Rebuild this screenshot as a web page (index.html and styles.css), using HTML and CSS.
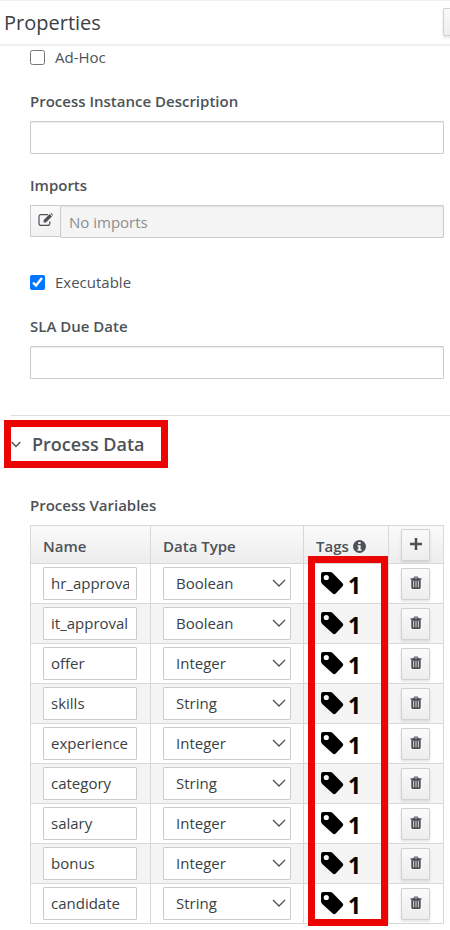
FILE: index.html
```html
<!DOCTYPE html>
<html lang="en">
<head>
<meta charset="utf-8">
<title>Properties</title>
<link rel="stylesheet" href="styles.css">
</head>
<body>
<svg class="sprite" aria-hidden="true">
  <symbol id="tag" viewBox="0 0 24 24"><path fill-rule="evenodd" d="M1 3.2Q1 1 3.2 1H9.8Q11.600 1 12.900 2.200L22.600 12.200Q24 13.700 22.600 15.200L15.700 22.400Q14.200 23.900 12.700 22.400L2.200 12.900Q1 11.700 1 10ZM6.300 3.900a2.600 2.600 0 1 0 0 5.200a2.600 2.600 0 0 0 0-5.200Z"/></symbol>
  <symbol id="trash" viewBox="0 0 12 14"><path fill-rule="evenodd" d="M3.500 2.200 4 .9Q4.200.400 4.700.400H7.300Q7.800.400 8 .900L8.500 2.200H11.500V3.500H10.700V11.600Q10.700 13 9.300 13H2.700Q1.300 13 1.300 11.600V3.500H.500V2.200ZM4.700 2.200H7.300L7 1.400H5ZM3.300 4.700V11.200H4.100V4.700ZM5.600 4.700V11.200H6.400V4.700ZM7.900 4.700V11.200H8.700V4.700Z"/></symbol>
</svg>
<header class="panel-header">
  <h1>Properties</h1>
  <button class="btn header-btn" type="button" aria-label="Close"></button>
</header>
<main class="panel">
  <form class="fields">
    <label class="check"><input type="checkbox">Ad-Hoc</label>
    <div class="field">
      <label for="description">Process Instance Description</label>
      <input class="text" id="description" type="text">
    </div>
    <div class="field imports">
      <label for="imports">Imports</label>
      <div class="group">
        <button type="button" aria-label="Edit imports">
          <svg width="16" height="14" viewBox="0 0 16 14"><path fill="none" stroke="currentColor" stroke-width="1.200" d="M10 1.600H3.200Q1 1.600 1 3.800V10.200Q1 12.400 3.200 12.400H9.600Q11.800 12.400 11.800 10.200V8.500"/><path fill="currentColor" d="M5.600 7.200 11.700 1.100 14 3.400 7.900 9.500H5.600ZM12.300.600Q13-.100 13.800.600L14.700 1.500Q15.300 2.200 14.600 2.800Z"/></svg>
        </button>
        <input class="text" id="imports" type="text" placeholder="No imports" readonly>
      </div>
    </div>
    <label class="check"><input type="checkbox" checked>Executable</label>
    <div class="field sla">
      <label for="sla">SLA Due Date</label>
      <input class="text" id="sla" type="text">
    </div>
  </form>
  <section class="data">
    <h2><button class="toggle" type="button" aria-expanded="true"><svg width="10" height="7" viewBox="0 0 10 7"><path fill="none" stroke="currentColor" stroke-width="1.300" d="M.700 1 5 5.500 9.300 1"/></svg>Process Data</button></h2>
    <div class="variables">
      <h3>Process Variables</h3>
      <div class="table-wrap">
        <table>
          <colgroup><col class="col-name"><col><col class="col-tags"><col class="col-action"></colgroup>
          <thead>
            <tr><th>Name</th><th>Data Type</th>
            <th><span class="tags-title">Tags <svg width="13" height="13" viewBox="0 0 13 13"><circle cx="6.500" cy="6.500" r="6.500" fill="currentColor"/><path fill="#f3f3f3" d="M5.300 2H7.600V4H5.300ZM4.500 5.200H7.600V9.300H8.500V10.700H4.500V9.300H5.400V6.500H4.500Z"/></svg></span></th>
            <th class="action"><button class="btn" type="button" aria-label="Add variable"><svg width="12" height="12" viewBox="0 0 12 12"><path fill="currentColor" d="M4.700 0H7.300V4.700H12V7.300H7.300V12H4.700V7.300H0V4.700H4.700Z"/></svg></button></th></tr>
          </thead>
          <tbody id="rows"></tbody>
        </table>
      </div>
    </div>
  </section>
</main>
<script src="rows.js"></script>
</body>
</html>
```
FILE: rows.js
```js
const variables = [
  ["hr_approval", "Boolean"],
  ["it_approval", "Boolean"],
  ["offer", "Integer"],
  ["skills", "String"],
  ["experience", "Integer"],
  ["category", "String"],
  ["salary", "Integer"],
  ["bonus", "Integer"],
  ["candidate", "String"]
];
const types = ["Boolean", "Integer", "String"];

document.getElementById("rows").innerHTML = variables.map(([name, type]) => `
  <tr>
    <td><input class="name" type="text" aria-label="Name" value="${name}"></td>
    <td><div class="select"><select aria-label="Data type of ${name}">${types.map(t => `<option${t === type ? " selected" : ""}>${t}</option>`).join("")}</select><svg width="14" height="8" viewBox="0 0 14 8"><path fill="none" stroke="currentColor" stroke-width="1.300" d="M1 1 7 7 13 1"/></svg></div></td>
    <td><span class="tag"><svg width="24" height="24"><use href="#tag"/></svg><span class="count">1</span></span></td>
    <td class="action"><button class="btn" type="button" aria-label="Delete ${name}"><svg width="12" height="14"><use href="#trash"/></svg></button></td>
  </tr>`).join("");
```
FILE: styles.css
```css
*, *::before, *::after { box-sizing: border-box; }

body {
  margin: 0;
  min-height: 100vh;
  overflow-x: hidden;
  background: #fff;
  color: #4d5258;
  font: 15px/20px "Open Sans", sans-serif;
}

h1, h2, h3 { margin: 0; }
input, select, button { font: inherit; color: inherit; }
svg { flex: none; }
.sprite { display: none; }

.panel-header {
  display: flex;
  align-items: center;
  justify-content: space-between;
  height: 46px;
  padding-left: 4px;
  overflow: hidden;
  border-top: 1px solid #f0f0f0;
  border-bottom: 2px solid #f0f0f0;
}
.panel-header h1 { font-size: 20px; font-weight: 400; color: #393f44; }

.btn {
  display: flex;
  align-items: center;
  justify-content: center;
  width: 29px;
  height: 32px;
  padding: 0 0 2px;
  border: 1px solid #d1d1d1;
  border-radius: 1px;
  background: linear-gradient(#fafafa, #ededed);
  box-shadow: 0 2px 3px rgba(3, 3, 3, .1);
  fill: currentColor;
}
.header-btn { flex: none; height: 28px; margin: 0 -22px 2px 0; }

.fields { padding: 1px 6px 36px 30px; }
.check { display: flex; align-items: center; gap: 10px; }
.check input { width: 15px; height: 15px; margin: 0; accent-color: #0075ff; }
.field { padding-top: 24px; }
.field > label { display: block; margin-bottom: 10px; font-weight: 600; }
.text {
  display: block;
  width: 100%;
  height: 33px;
  padding: 0 8px;
  border: 1px solid #ccc;
  border-radius: 1px;
  background: #fff;
  box-shadow: inset 0 1px 1px rgba(3, 3, 3, .08);
}
.text::placeholder { color: #8b8d8f; opacity: 1; }
.imports { padding-bottom: 34px; padding-top: 21px; }
.group { display: flex; }
.group button {
  display: flex;
  align-items: center;
  justify-content: center;
  width: 30px;
  height: 32px;
  padding: 0 0 2px;
  border: 1px solid #ccc;
  border-right: 0;
  border-radius: 1px 0 0 1px;
  background: linear-gradient(#fafafa, #f1f1f1);
}
.group .text { flex: 1; width: auto; min-width: 0; background: #f4f4f4; }

.data { margin-left: 11px; border-top: 1px solid #ddd; }
.data h2 { display: flex; padding-top: 4px; margin-left: -7px; }
.toggle {
  display: flex;
  align-items: center;
  gap: 11px;
  height: 48px;
  padding: 0 16px 0 0;
  border: 7px solid #eb0505;
  background: none;
  font-size: 18px;
  font-weight: 600;
}
.variables { padding: 27px 6px 6px 19px; }
.variables h3 { margin-bottom: 10px; font-size: 15px; font-weight: 600; }

.table-wrap { position: relative; }
.table-wrap::after {
  content: "";
  position: absolute;
  top: 31px;
  right: 56px;
  bottom: -2px;
  width: 80px;
  border: 7px solid #eb0505;
  pointer-events: none;
}
table { width: 100%; table-layout: fixed; border-collapse: collapse; }
.col-name { width: 120px; }
.col-tags { width: 85px; }
.col-action { width: 55px; }
th, td { padding: 0 12px; border: 1px solid #d8d8d8; text-align: left; }
thead tr { height: 38px; background: linear-gradient(#fafafa, #ededed); }
tbody tr { height: 40px; }
tbody tr:nth-child(even) { background: #f4f4f4; }
th { padding-top: 3px; font-weight: 600; }
th.action { padding-top: 0; }
.tags-title { display: flex; align-items: center; gap: 4px; }

.name, .select select {
  display: block;
  width: 100%;
  height: 33px;
  border: 1px solid #ccc;
  border-radius: 1px;
  background: #fff;
  color: #393f44;
}
.name { width: 94px; padding: 0 7px 2px; }
.select { position: relative; color: #4d5258; }
.select select { appearance: none; padding: 0 28px 2px 12px; }
.select svg { position: absolute; top: 12px; right: 5px; pointer-events: none; }
.tag { display: flex; align-items: center; gap: 4px; padding-left: 4px; color: #000; fill: currentColor; }
.tag svg { margin-bottom: 2px; }
.count { padding-top: 2px; font-size: 23px; line-height: 30px; font-weight: 700; }
```
